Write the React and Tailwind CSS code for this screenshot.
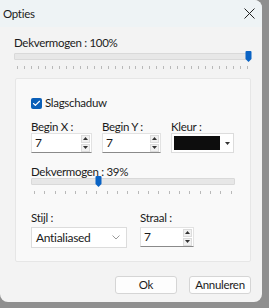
import { Check } from 'lucide-react';

const font = { fontFamily: 'Lato, "Noto Sans", "Liberation Sans", sans-serif' };

function Slider({ ticks, pos }) {
  return (
    <div className="relative">
      <div className="h-[7px] bg-[#e7e7e7] border border-[#d9d9d9] rounded-[1px]" />
      <div className="absolute top-[-2px] w-[7px] h-[11px]" style={{ left: pos }}>
        <svg width="7" height="11" viewBox="0 0 7 11">
          <path d="M0.5 1 Q0.5 0 1.5 0 L5.5 0 Q6.5 0 6.5 1 L6.5 8 L3.5 11 L0.5 8 Z" fill="#0a63c4" />
        </svg>
      </div>
      <div className="flex justify-between px-[3px] mt-[6px]">
        {Array.from({ length: ticks }).map((_, i) => (
          <div key={i} className="w-px h-[3px] bg-[#b9b9b9]" />
        ))}
      </div>
    </div>
  );
}

function Spin() {
  return (
    <div className="flex flex-col gap-px pr-px">
      <div className="w-[9px] h-[8px] bg-[#f1f1f1] border border-[#dcdcdc] flex items-center justify-center">
        <svg width="5" height="3" viewBox="0 0 5 3"><path d="M0 3 L2.5 0 L5 3 Z" fill="#333" /></svg>
      </div>
      <div className="w-[9px] h-[8px] bg-[#f1f1f1] border border-[#dcdcdc] flex items-center justify-center">
        <svg width="5" height="3" viewBox="0 0 5 3"><path d="M0 0 L2.5 3 L5 0 Z" fill="#333" /></svg>
      </div>
    </div>
  );
}

function NumInput({ width, value }) {
  return (
    <div className={`${width} h-[20px] bg-white border border-[#e2e2e2] border-b-[#8a8a8a] flex items-center justify-between pl-[3px]`}>
      <span className="text-[12px]">{value}</span>
      <Spin />
    </div>
  );
}

export default function App() {
  return (
    <div className="w-[269px] h-[308px] bg-[#8f8f8f] overflow-hidden text-[11.5px] tracking-[-0.3px] text-[#1b1b1b]" style={font}>
      <div className="w-[262px] h-[302px] bg-[#f3f3f3] rounded-tr-[8px] rounded-br-[8px] rounded-bl-[8px] flex flex-col">
        {/* Title bar */}
        <div className="h-[27px] bg-[#eef3f5] rounded-tr-[8px] flex items-center justify-between pl-[3px] pr-[7px]">
          <span>Opties</span>
          <svg width="11" height="11" viewBox="0 0 11 11">
            <path d="M0.5 0.5 L10.5 10.5 M10.5 0.5 L0.5 10.5" stroke="#222" strokeWidth="1" />
          </svg>
        </div>

        <div className="px-[14px] pr-[11px] flex flex-col">
          <div className="mt-[9px] leading-[14px]">Dekvermogen : 100%</div>
          <div className="mt-[3px]">
            <Slider ticks={34} pos="231px" />
          </div>

          {/* Group panel */}
          <div className="mt-[9px] ml-px h-[184px] bg-[#f9f9f9] border border-[#e6e6e6] rounded-[2px] pl-[15px] pr-[14px]">
            <div className="mt-[17px] flex items-center gap-[3px] leading-[14px]">
              <div className="w-[11px] h-[11px] rounded-[2px] bg-[#0a5fb8] flex items-center justify-center">
                <Check size={9} color="#fff" strokeWidth={3} />
              </div>
              <span>Slagschaduw</span>
            </div>

            <div className="mt-[10px] flex">
              <div className="w-[71px]">
                <div className="leading-[13px]">Begin X :</div>
                <NumInput width="w-[61px]" value="7" />
              </div>
              <div className="w-[69px]">
                <div className="leading-[13px]">Begin Y :</div>
                <NumInput width="w-[59px]" value="7" />
              </div>
              <div>
                <div className="leading-[13px]">Kleur :</div>
                <div className="w-[63px] h-[20px] bg-white border border-[#dcdcdc] flex items-center pl-[2px] gap-[2px]">
                  <div className="w-[46px] h-[14px] bg-[#0d0d0d]" />
                  <div className="flex-1 flex justify-center">
                    <svg width="5" height="3" viewBox="0 0 5 3"><path d="M0 0 L2.5 3 L5 0 Z" fill="#333" /></svg>
                  </div>
                </div>
              </div>
            </div>

            <div className="mt-[12px] leading-[13px]">Dekvermogen : 39%</div>
            <div className="w-[204px]">
              <Slider ticks={20} pos="64px" />
            </div>

            <div className="mt-[17px] flex">
              <div className="w-[109px]">
                <div className="leading-[13px]">Stijl :</div>
                <div className="mt-[3px] w-[96px] h-[21px] bg-white border border-[#dcdcdc] flex items-center justify-between pl-[4px] pr-[6px]">
                  <span className="text-[12px]">Antialiased</span>
                  <svg width="8" height="5" viewBox="0 0 8 5"><path d="M0.5 0.5 L4 4 L7.5 0.5" stroke="#9a9a9a" fill="none" /></svg>
                </div>
              </div>
              <div>
                <div className="leading-[13px]">Straal :</div>
                <div className="mt-[3px]"><NumInput width="w-[54px]" value="7" /></div>
              </div>
            </div>
          </div>

          {/* Buttons */}
          <div className="mt-[14px] flex justify-end gap-[12px]">
            <button className="w-[62px] h-[18px] bg-[#fdfdfd] border border-[#d5d5d5] rounded-[3px] leading-none">Ok</button>
            <button className="w-[62px] h-[18px] bg-[#fdfdfd] border border-[#d5d5d5] rounded-[3px] leading-none">Annuleren</button>
          </div>
        </div>
      </div>
    </div>
  );
}
